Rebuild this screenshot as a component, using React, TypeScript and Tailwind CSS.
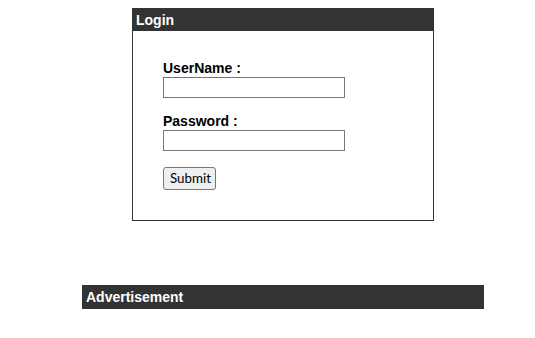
export default function App() {
  return (
    <div className="min-h-screen bg-white pt-[8px] font-['Liberation_Sans',Arial,sans-serif] text-[14px] leading-[17px] text-black">
      <div className="ml-[132px] w-[302px] border border-[#333333]">
        <div className="h-[22px] bg-[#333333] pl-[3px] pt-[3px] font-bold text-white">Login</div>
        <form className="flex flex-col items-start pl-[30px] pt-[29px] pb-[30px]" onSubmit={(e) => e.preventDefault()}>
          <label className="font-bold">UserName :</label>
          <input type="text" className="h-[21px] w-[182px] border border-[#767676] bg-white outline-none" />
          <label className="mt-[15px] font-bold">Password :</label>
          <input type="password" className="h-[21px] w-[182px] border border-[#767676] bg-white outline-none" />
          <button
            type="submit"
            className="mt-[16px] h-[23px] w-[53px] rounded-[3px] border border-[#767676] bg-[#efefef] px-[6px] font-['Lato',sans-serif] text-[13.33px] leading-[15px] text-black"
          >
            Submit
          </button>
        </form>
      </div>
      <div className="ml-[82px] mt-[64px] h-[24px] w-[402px] bg-[#333333] pl-[4px] pt-[4px] font-bold text-white">
        Advertisement
      </div>
    </div>
  );
}
